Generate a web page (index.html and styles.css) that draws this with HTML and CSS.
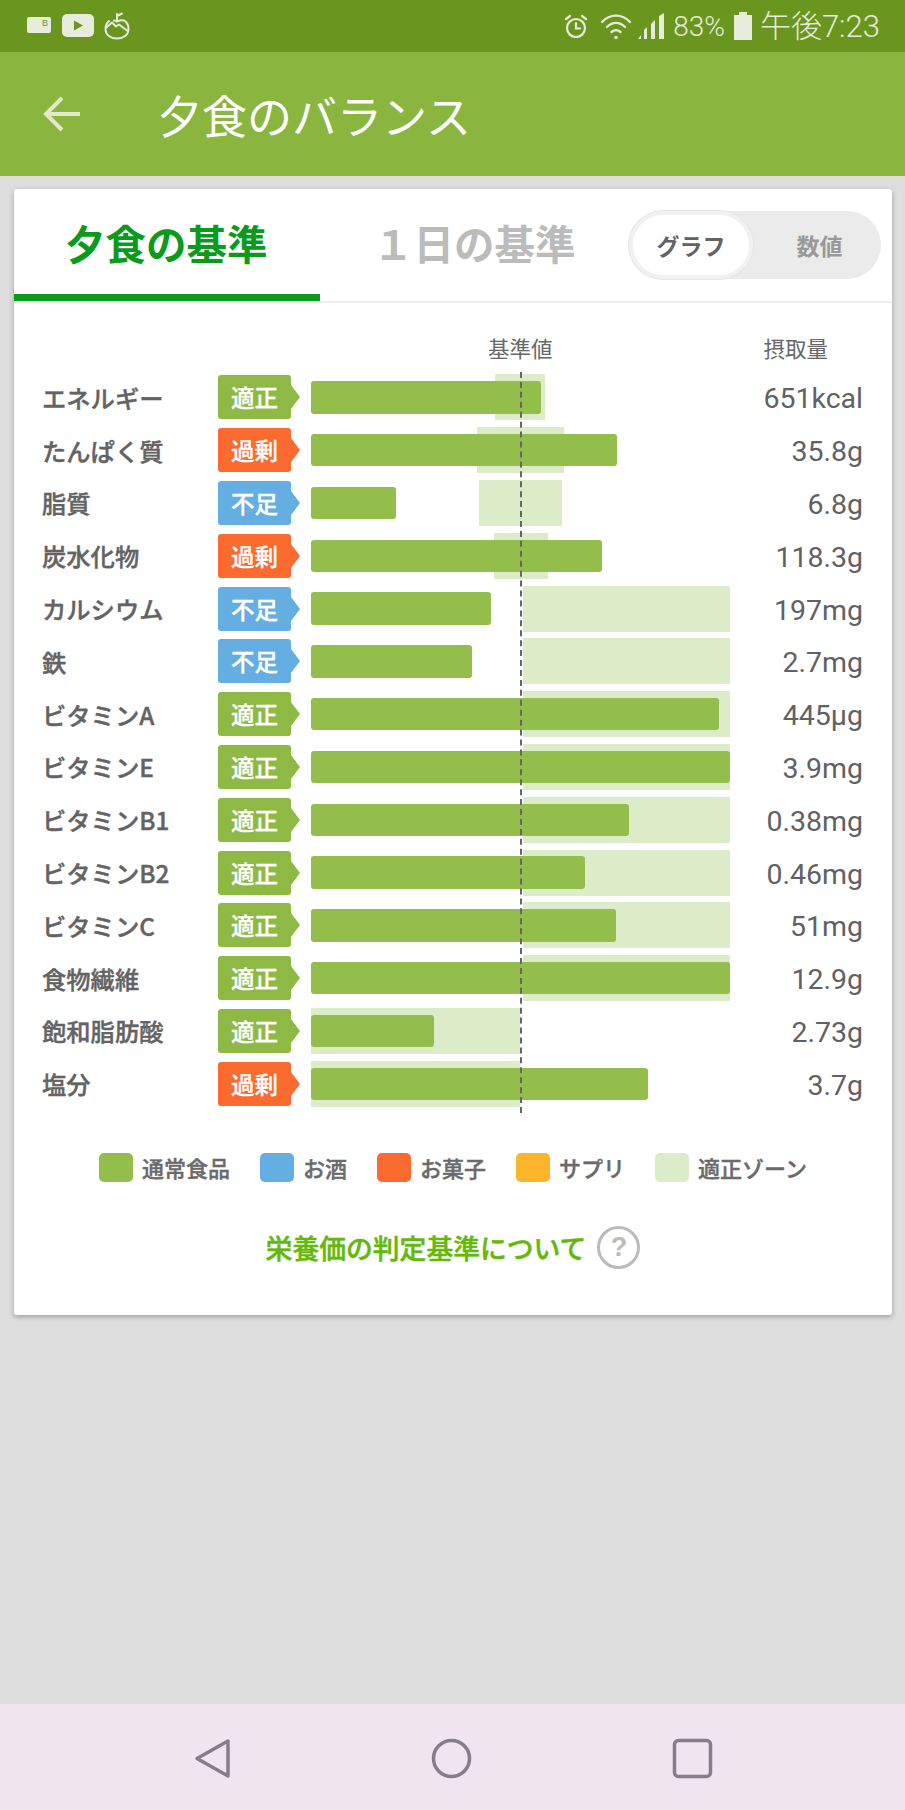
FILE: index.html
```html
<!DOCTYPE html>
<html lang="ja">
<head>
  <meta charset="UTF-8" />
  <meta name="viewport" content="width=device-width, initial-scale=1.0" />
  <title>夕食のバランス</title>
  <link rel="stylesheet" href="styles.css">
</head>
<body>
  <div class="status-bar">
    <svg class="st-mail" width="24" height="16" viewBox="0 0 24 16"><rect width="24" height="16" rx="2" fill="#e6ebdc"/><text x="15" y="9" class="st-mail-text">B</text></svg>
    <svg class="st-yt" width="32" height="23" viewBox="0 0 32 23"><rect width="32" height="23" rx="5" fill="#e6ebdc"/><path d="M12 6.500l9 5-9 5z" fill="#6a961f"/></svg>
    <svg class="st-apple" width="26" height="29" viewBox="0 0 26 29" fill="none" stroke="#e6ebdc" stroke-width="2" stroke-linecap="round" stroke-linejoin="round"><path d="M5 10C2.500 12 1.500 15 1.500 18 1.500 24 6.500 27.500 13 27.500S24.500 24 24.500 18c0-3-1-6-3.500-8-2.500-1.500-5.500-.5-8 .5-1-.4-2-.7-3-.9"/><path d="M13 10V3M13 5l5-2.500"/><path d="M1.800 17l6.200-5.500 4 4 3-2 8 6"/></svg>

    <div class="st-right">
      <svg width="24" height="24" viewBox="0 0 24 24" fill="none" stroke="#e6ebdc" stroke-width="2.200" stroke-linecap="round"><circle cx="12" cy="14" r="9"/><path d="M12 9v5.500h4M2 5l4-3M22 5l-4-3"/></svg>
      <svg class="st-wifi" width="32" height="27" viewBox="0 0 32 27" fill="none" stroke="#e6ebdc" stroke-width="2.400" stroke-linecap="round"><path d="M2 9c8-8.500 20-8.500 28 0M7 14c5.500-5.500 12.500-5.500 18 0M11.500 19c3-2.500 6-2.500 9 0"/><circle cx="16" cy="24.500" r="1.800" fill="#e6ebdc" stroke="none"/></svg>
      <svg class="st-signal" width="27" height="26" viewBox="0 0 27 26" fill="#e6ebdc"><path d="M0 26l3-4v4zM6 26v-9l3-3v12zM13 26V11l4-4v19zM21 26V3l5-3v26z"/></svg>
      <span class="st-battery-text">83%</span>
      <svg class="st-battery" width="18" height="28" viewBox="0 0 18 28" fill="#e6ebdc"><path d="M5 0h8v3h5v25H0V3h5z"/></svg>
      <span class="st-clock">午後7:23</span>
    </div>
  </div>

  <header class="app-bar">
    <svg class="back-arrow" width="38" height="36" viewBox="0 0 38 36" fill="none" stroke="#dfe9cc" stroke-width="4"><path d="M37 18H4M19 2L3 18l16 16"/></svg>
    <h1 class="app-title">夕食のバランス</h1>
  </header>

  <main class="content">
    <section class="card">
      <div class="tabs">
        <div class="tab tab-active">夕食の基準</div>
        <div class="tab tab-other">１日の基準</div>
        <div class="toggle">
          <div class="toggle-on">グラフ</div>
          <div class="toggle-off">数値</div>
        </div>
      </div>

      <div class="col-heads">
        <span class="head-base">基準値</span>
        <span class="head-amount">摂取量</span>
      </div>

      <div class="rows">
        <div class="base-line"></div>

        <div class="row">
          <div class="name">エネルギー</div>
          <div class="badge ok">適正</div>
          <div class="track"><div class="zone" style="left:184px;width:50px"></div><div class="bar" style="width:230px"></div></div>
          <div class="value">651kcal</div>
        </div>
        <div class="row">
          <div class="name">たんぱく質</div>
          <div class="badge over">過剰</div>
          <div class="track"><div class="zone" style="left:166px;width:87px"></div><div class="bar" style="width:306px"></div></div>
          <div class="value">35.8g</div>
        </div>
        <div class="row">
          <div class="name">脂質</div>
          <div class="badge short">不足</div>
          <div class="track"><div class="zone" style="left:168px;width:83px"></div><div class="bar" style="width:85px"></div></div>
          <div class="value">6.8g</div>
        </div>
        <div class="row">
          <div class="name">炭水化物</div>
          <div class="badge over">過剰</div>
          <div class="track"><div class="zone" style="left:183px;width:54px"></div><div class="bar" style="width:291px"></div></div>
          <div class="value">118.3g</div>
        </div>
        <div class="row">
          <div class="name">カルシウム</div>
          <div class="badge short">不足</div>
          <div class="track"><div class="zone" style="left:212px;width:207px"></div><div class="bar" style="width:180px"></div></div>
          <div class="value">197mg</div>
        </div>
        <div class="row">
          <div class="name">鉄</div>
          <div class="badge short">不足</div>
          <div class="track"><div class="zone" style="left:212px;width:207px"></div><div class="bar" style="width:161px"></div></div>
          <div class="value">2.7mg</div>
        </div>
        <div class="row">
          <div class="name">ビタミンA</div>
          <div class="badge ok">適正</div>
          <div class="track"><div class="zone" style="left:212px;width:207px"></div><div class="bar" style="width:408px"></div></div>
          <div class="value">445μg</div>
        </div>
        <div class="row">
          <div class="name">ビタミンE</div>
          <div class="badge ok">適正</div>
          <div class="track"><div class="zone" style="left:212px;width:207px"></div><div class="bar" style="width:419px"></div></div>
          <div class="value">3.9mg</div>
        </div>
        <div class="row">
          <div class="name">ビタミンB1</div>
          <div class="badge ok">適正</div>
          <div class="track"><div class="zone" style="left:212px;width:207px"></div><div class="bar" style="width:318px"></div></div>
          <div class="value">0.38mg</div>
        </div>
        <div class="row">
          <div class="name">ビタミンB2</div>
          <div class="badge ok">適正</div>
          <div class="track"><div class="zone" style="left:212px;width:207px"></div><div class="bar" style="width:274px"></div></div>
          <div class="value">0.46mg</div>
        </div>
        <div class="row">
          <div class="name">ビタミンC</div>
          <div class="badge ok">適正</div>
          <div class="track"><div class="zone" style="left:212px;width:207px"></div><div class="bar" style="width:305px"></div></div>
          <div class="value">51mg</div>
        </div>
        <div class="row">
          <div class="name">食物繊維</div>
          <div class="badge ok">適正</div>
          <div class="track"><div class="zone" style="left:212px;width:207px"></div><div class="bar" style="width:419px"></div></div>
          <div class="value">12.9g</div>
        </div>
        <div class="row">
          <div class="name">飽和脂肪酸</div>
          <div class="badge ok">適正</div>
          <div class="track"><div class="zone" style="left:0;width:209px"></div><div class="bar" style="width:123px"></div></div>
          <div class="value">2.73g</div>
        </div>
        <div class="row">
          <div class="name">塩分</div>
          <div class="badge over">過剰</div>
          <div class="track"><div class="zone" style="left:0;width:209px"></div><div class="bar" style="width:337px"></div></div>
          <div class="value">3.7g</div>
        </div>
      </div>

      <div class="legend">
        <div class="legend-item"><span class="swatch sw-food"></span>通常食品</div>
        <div class="legend-item"><span class="swatch sw-drink"></span>お酒</div>
        <div class="legend-item"><span class="swatch sw-sweet"></span>お菓子</div>
        <div class="legend-item"><span class="swatch sw-supp"></span>サプリ</div>
        <div class="legend-item"><span class="swatch sw-zone"></span>適正ゾーン</div>
      </div>

      <div class="about">
        <span class="about-text">栄養価の判定基準について</span>
        <span class="help">?</span>
      </div>
    </section>
  </main>

  <nav class="nav-bar">
    <svg width="37" height="41" viewBox="0 0 37 41" fill="none" stroke="#857d87" stroke-width="3.500" stroke-linejoin="round"><path d="M34 3L3 20.500 34 38z"/></svg>
    <svg width="41" height="41" viewBox="0 0 41 41" fill="none" stroke="#857d87" stroke-width="3.500"><circle cx="20.500" cy="20.500" r="18"/></svg>
    <svg width="41" height="41" viewBox="0 0 41 41" fill="none" stroke="#857d87" stroke-width="3.500"><rect x="2.500" y="2.500" width="36" height="36" rx="4"/></svg>
  </nav>
</body>
</html>
```

FILE: styles.css
```css
:root {
  --green: #93be4b;
  --orange: #fb6a2f;
  --blue: #64aee2;
  --yellow: #ffb52b;
  --zone: #dcebc8;
  --text: #636363;
}

* {
  box-sizing: border-box;
}

html, body {
  margin: 0;
  height: 100%;
}

body {
  width: 905px;
  height: 1810px;
  display: flex;
  flex-direction: column;
  overflow: hidden;
  background: #dddddd;
  font-family: "Noto Sans CJK JP", "Noto Sans", sans-serif;
  color: var(--text);
}

/* status bar */
.status-bar {
  height: 52px;
  flex: none;
  display: flex;
  align-items: center;
  padding-left: 27px;
  background: #6a961f;
  color: #e6ebdc;
}

.st-mail { margin-top: -2px; }
.st-mail-text { font-family: "Liberation Sans", sans-serif; font-size: 9px; fill: #6a961f; }
.st-yt { margin-left: 11px; margin-top: -1px; }
.st-apple { margin-left: 10px; margin-top: -1px; }

.st-right {
  margin-left: auto;
  display: flex;
  align-items: center;
  padding-right: 25px;
}

.st-wifi { margin-left: 12px; }
.st-signal { margin-left: 6px; }
.st-battery { margin-left: 9px; }

.st-battery-text {
  margin-left: 8px;
  font-family: Roboto, sans-serif;
  font-size: 28px;
  font-weight: 300;
}

.st-clock {
  margin-left: 8px;
  font-family: Roboto, "Noto Sans CJK JP", sans-serif;
  font-size: 31px;
  font-weight: 300;
  line-height: 1;
}

/* app bar */
.app-bar {
  height: 124px;
  flex: none;
  display: flex;
  align-items: center;
  padding-left: 43px;
  background: #8ab640;
}

.app-title {
  margin: 0 0 0 76px;
  font-size: 45px;
  font-weight: 400;
  color: #fff;
}

/* card */
.content {
  flex: 1;
  padding: 13px 13px 0 14px;
}

.card {
  height: 1126px;
  background: #fff;
  border-radius: 3px;
  box-shadow: 0 2px 5px rgba(0, 0, 0, 0.28);
}

.tabs {
  height: 114px;
  display: flex;
  border-bottom: 2px solid #eeeeee;
}

.tab {
  height: 112px;
  font-size: 40.500px;
  font-weight: 700;
  line-height: 108px;
}

.tab-active {
  width: 306px;
  padding-left: 51px;
  color: #0a9a1c;
  border-bottom: 7px solid #0a9a1c;
}

.tab-other {
  padding-left: 53px;
  color: #bbbbbb;
}

.toggle {
  width: 252px;
  height: 68px;
  margin: 22px 11px 0 auto;
  display: flex;
  align-items: center;
  background: #ebebeb;
  border-radius: 34px;
  font-size: 23px;
  font-weight: 700;
}

.toggle-on {
  width: 124px;
  height: 68px;
  line-height: 60px;
  text-align: center;
  background: #fff;
  border: 4px solid #f1f1f1;
  border-radius: 34px;
  box-shadow: 0 0 0 1px #e6e6e6;
}

.toggle-off {
  flex: 1;
  padding-left: 5px;
  text-align: center;
  color: #999999;
}

/* table header */
.col-heads {
  height: 68px;
  display: flex;
  align-items: center;
  padding-top: 20px;
  font-size: 21.500px;
  color: #666666;
}

.head-base { margin-left: 474px; }
.head-amount { margin-left: 211px; }

/* rows */
.rows {
  position: relative;
}

.base-line {
  position: absolute;
  z-index: 2;
  left: 506px;
  top: 1px;
  bottom: -3px;
  border-left: 2px dashed #666666;
}

.row {
  height: 52.800px;
  display: grid;
  grid-template-columns: 176px 93px 419px 1fr;
  align-items: center;
  padding: 0 29px 0 28px;
}

.name {
  font-size: 24.300px;
  font-weight: 500;
  -webkit-text-stroke: 0.4px var(--text);
  white-space: nowrap;
}

.badge {
  position: relative;
  width: 73px;
  height: 44px;
  border-radius: 3px;
  font-size: 23.500px;
  font-weight: 500;
  -webkit-text-stroke: 0.3px #fff;
  line-height: 44px;
  text-align: center;
  color: #fff;
}

.badge::after {
  content: "";
  position: absolute;
  left: 100%;
  top: 10px;
  border-left: 9px solid;
  border-top: 12px solid transparent;
  border-bottom: 12px solid transparent;
}

.ok { background: #8fb945; }
.ok::after { border-left-color: #8fb945; }
.over { background: var(--orange); }
.over::after { border-left-color: var(--orange); }
.short { background: var(--blue); }
.short::after { border-left-color: var(--blue); }

.track {
  position: relative;
  height: 46px;
  display: flex;
  align-items: center;
}

.zone {
  position: absolute;
  top: 0;
  bottom: 0;
  background: var(--zone);
}

.bar {
  position: relative;
  height: 32.500px;
  background: var(--green);
  border-radius: 3px;
}

.value {
  padding-top: 3px;
  font-family: Roboto, sans-serif;
  font-size: 28.500px;
  text-align: right;
  color: #616161;
}

/* legend */
.legend {
  margin-top: 41px;
  display: flex;
  justify-content: center;
  gap: 30px;
  font-size: 22px;
  font-weight: 500;
  -webkit-text-stroke: 0.4px #6a6a6a;
  color: #6a6a6a;
}

.legend-item {
  display: flex;
  align-items: center;
  gap: 9px;
}

.swatch {
  width: 34px;
  height: 29px;
  border-radius: 5px;
}

.sw-food { background: var(--green); }
.sw-drink { background: var(--blue); }
.sw-sweet { background: var(--orange); }
.sw-supp { background: var(--yellow); }
.sw-zone { background: var(--zone); }

/* link */
.about {
  margin-top: 43px;
  display: flex;
  justify-content: center;
  align-items: center;
  gap: 11px;
}

.about-text {
  font-size: 26.800px;
  font-weight: 500;
  -webkit-text-stroke: 0.5px #64b80a;
  color: #64b80a;
}

.help {
  width: 43px;
  height: 43px;
  border: 3.500px solid #bbbbbb;
  border-radius: 50%;
  font-family: "Liberation Sans", sans-serif;
  font-size: 27px;
  font-weight: 700;
  line-height: 36px;
  text-align: center;
  color: #bbbbbb;
}

/* android nav */
.nav-bar {
  height: 106px;
  flex: none;
  display: flex;
  align-items: flex-start;
  padding: 34px 192px 0 194px;
  justify-content: space-between;
  background: #f0e4ee;
}
```
